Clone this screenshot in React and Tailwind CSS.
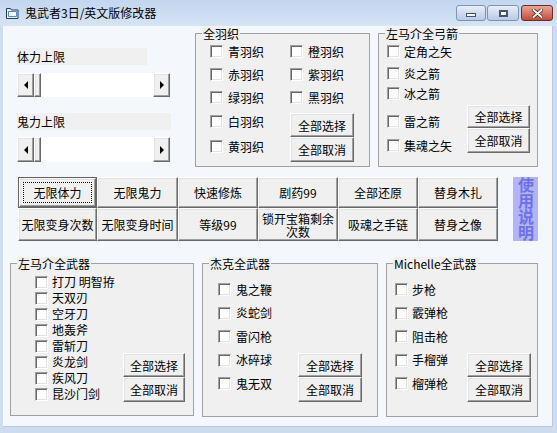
const font = "font-['Noto_Sans_CJK_SC','Noto_Sans',sans-serif]";

const btn3d =
  "bg-[#f0f0f0] border border-t-white border-l-white border-r-[#696969] border-b-[#696969] shadow-[inset_-1px_-1px_#a0a0a0,inset_1px_1px_#e3e3e3]";

function Button({ children, className = "" }) {
  return (
    <div className={`${btn3d} flex items-center justify-center text-[12px] leading-[13px] text-black text-center ${className}`}>
      {children}
    </div>
  );
}

function Check({ label, gap = "ml-[5px]", className = "" }) {
  return (
    <div className={`flex items-center h-[13px] ${className}`}>
      <span className="w-[13px] h-[13px] shrink-0 bg-white border border-t-[#a0a0a0] border-l-[#a0a0a0] border-r-white border-b-white shadow-[inset_1px_1px_#696969,inset_-1px_-1px_#e3e3e3]" />
      <span className={`${gap} text-[12px] leading-none whitespace-nowrap`}>{label}</span>
    </div>
  );
}

function Group({ title, className = "", children }) {
  return (
    <div className={`relative border border-[#a0a0a0] bg-[#f0f0f0] ${className}`}>
      <span className="absolute left-[6px] -top-[7px] px-[1px] bg-[#f0f0f0] text-[12px] leading-[13px] whitespace-nowrap">
        {title}
      </span>
      {children}
    </div>
  );
}

function Arrow({ dir }) {
  return (
    <div className={`${btn3d} w-[17px] h-full flex items-center justify-center`}>
      {dir === "left" ? (
        <span className="w-0 h-0 border-y-[4px] border-y-transparent border-r-[4px] border-r-black" />
      ) : (
        <span className="w-0 h-0 border-y-[4px] border-y-transparent border-l-[4px] border-l-black" />
      )}
    </div>
  );
}

function Scroll({ className = "" }) {
  return (
    <div className={`flex w-[153px] h-[24px] bg-white ${className}`}>
      <Arrow dir="left" />
      <div className={`${btn3d} w-[7px] h-full`} />
      <div className="flex-1" />
      <Arrow dir="right" />
    </div>
  );
}

function ButtonPair({ w = "w-[64px]", h1 = "h-[24px]", h2 = "h-[25px]" }) {
  return (
    <>
      <Button className={`${w} ${h1}`}>全部选择</Button>
      <Button className={`${w} ${h2}`}>全部取消</Button>
    </>
  );
}

const cheats = [
  "无限体力", "无限鬼力", "快速修炼", "剧药99", "全部还原", "替身木扎",
  "无限变身次数", "无限变身时间", "等级99", "锁开宝箱剩余次数", "吸魂之手链", "替身之像",
];

export default function App() {
  return (
    <div className={`${font} w-[557px] h-[433px] bg-[#cddcef] flex flex-col text-black overflow-hidden`}>
      {/* title bar */}
      <div className="h-[26px] flex bg-gradient-to-b from-[#c2d6ef] to-[#d6e4f4]">
        <div className="flex items-center flex-1">
          <svg className="ml-[6px]" width="13" height="12" viewBox="0 0 13 12">
            <path d="M0.5 1.5h4l1 1.5h6.5v8.5h-11.5z" fill="#e8f0f8" stroke="#2b3a55" />
            <path d="M2.5 4.5h8v5h-8z" fill="#fff" stroke="#4a8fc7" />
          </svg>
          <span className="ml-[6px] text-[12px] leading-none">鬼武者3日/英文版修改器</span>
        </div>
        <div className="flex items-start pt-[5px] pr-[4px]">
          <div className="w-[30px] h-[16px] rounded-[3px] border border-[#7b93b4] bg-gradient-to-b from-[#e7eef8] to-[#b9cbe4] flex items-center justify-center">
            <span className="w-[10px] h-[4px] mt-[4px] bg-white border border-[#46566e]" />
          </div>
          <div className="ml-[1px] w-[32px] h-[16px] rounded-[3px] border border-[#7b93b4] bg-gradient-to-b from-[#e7eef8] to-[#b9cbe4] flex items-center justify-center">
            <span className="w-[9px] h-[7px] border-2 border-[#46566e] bg-white" />
          </div>
          <div className="ml-[2px] w-[32px] h-[16px] rounded-[3px] border border-[#6d2b24] bg-gradient-to-b from-[#e8a596] to-[#c44a38] flex items-center justify-center">
            <svg width="11" height="9" viewBox="0 0 11 9">
              <path d="M1.5 1l8 7M9.5 1l-8 7" stroke="#4a1a14" strokeWidth="3.4" strokeLinecap="round" />
              <path d="M1.5 1l8 7M9.5 1l-8 7" stroke="#fff" strokeWidth="2" strokeLinecap="round" />
            </svg>
          </div>
        </div>
      </div>

      {/* client area */}
      <div className="ml-[3px] w-[550px] h-[401px] bg-[#f4f7fc] border-b border-r border-[#b7cae3] flex flex-col">
        {/* top section */}
        <div className="h-[151px] flex items-start">
          <div className="w-[192px] pl-[14px] pt-[22px] flex flex-col">
            <div className="w-[130px] h-[17px] bg-[#f0f0f0] flex items-center text-[12px] leading-none">体力上限</div>
            <Scroll className="mt-[8px]" />
            <div className="mt-[16px] w-[154px] h-[17px] bg-[#f0f0f0] flex items-center text-[12px] leading-none">鬼力上限</div>
            <Scroll className="mt-[7px] h-[25px]" />
          </div>

          <Group title="全羽织" className="mt-[7px] w-[175px] h-[134px]">
            <div className="flex pl-[14px]">
              <div className="w-[80px] flex flex-col pt-[11px]">
                <Check label="青羽织" />
                <Check label="赤羽织" className="mt-[10px]" />
                <Check label="绿羽织" className="mt-[10px]" />
                <Check label="白羽织" className="mt-[11px]" />
                <Check label="黄羽织" className="mt-[12px]" />
              </div>
              <div className="flex flex-col pt-[11px]">
                <Check label="橙羽织" />
                <Check label="紫羽织" className="mt-[10px]" />
                <Check label="黑羽织" className="mt-[10px]" />
                <div className="mt-[9px] flex flex-col">
                  <ButtonPair />
                </div>
              </div>
            </div>
          </Group>

          <Group title="左马介全弓箭" className="ml-[8px] mt-[7px] w-[160px] h-[134px]">
            <div className="flex pl-[8px]">
              <div className="w-[80px] flex flex-col pt-[11px]">
                <Check label="定角之矢" gap="ml-[4px]" />
                <Check label="炎之箭" gap="ml-[4px]" className="mt-[9px]" />
                <Check label="冰之箭" gap="ml-[4px]" className="mt-[7px]" />
                <Check label="雷之箭" gap="ml-[4px]" className="mt-[15px]" />
                <Check label="集魂之矢" gap="ml-[4px]" className="mt-[11px]" />
              </div>
              <div className="flex flex-col pt-[71px]">
                <ButtonPair w="w-[63px]" h1="h-[23px]" h2="h-[25px]" />
              </div>
            </div>
          </Group>
        </div>

        {/* cheat buttons */}
        <div className="flex items-start ml-[15px]">
          <div className="grid grid-cols-[79px_81px_80px_80px_80px_80px] grid-rows-[31px_33px]">
            {cheats.map((c, i) =>
              i === 0 ? (
                <div key={c} className="border border-[#646464]">
                  <div className={`${btn3d} w-full h-full p-[3px]`}>
                    <div className="w-full h-full border border-dotted border-black flex items-center justify-center text-[12px] leading-none">
                      {c}
                    </div>
                  </div>
                </div>
              ) : (
                <Button key={c} className="px-0">{c}</Button>
              )
            )}
          </div>
          <div className="ml-[15px] w-[25px] h-[64px] bg-[#b3b3fa] flex justify-center">
            <span className="[writing-mode:vertical-rl] text-[#6e6ef5] font-bold text-[16px] leading-[25px]">
              使用说明
            </span>
          </div>
        </div>

        {/* bottom groups */}
        <div className="mt-[22px] pl-[7px] flex items-start gap-[8px]">
          <Group title="左马介全武器" className="w-[184px] h-[153px]">
            <div className="flex pl-[24px]">
              <div className="w-[88px] flex flex-col pt-[10px]">
                {["打刀 明智拵", "天双刃", "空牙刀", "地轰斧", "雷斩刀", "炎龙剑", "疾风刀", "昆沙门剑"].map((t) => (
                  <div key={t} className="h-[16px] flex items-center">
                    <Check label={t} gap="ml-[4px]" />
                  </div>
                ))}
              </div>
              <div className="flex flex-col pt-[89px]">
                <ButtonPair w="w-[62px]" />
              </div>
            </div>
          </Group>

          <Group title="杰克全武器" className="w-[176px] h-[154px]">
            <div className="flex pl-[15px]">
              <div className="w-[80px] flex flex-col pt-[14px]">
                {["鬼之鞭", "炎蛇剑", "雷闪枪", "冰碎球", "鬼无双"].map((t) => (
                  <div key={t} className="h-[23.5px] flex items-center">
                    <Check label={t} />
                  </div>
                ))}
              </div>
              <div className="flex flex-col pt-[89px]">
                <ButtonPair />
              </div>
            </div>
          </Group>

          <Group title="Michelle全武器" className="w-[152px] h-[154px]">
            <div className="flex pl-[8px]">
              <div className="w-[72px] flex flex-col pt-[14px]">
                {["步枪", "霰弹枪", "阻击枪", "手榴弹", "榴弹枪"].map((t) => (
                  <div key={t} className="h-[23.5px] flex items-center">
                    <Check label={t} gap="ml-[4px]" />
                  </div>
                ))}
              </div>
              <div className="flex flex-col pt-[89px]">
                <ButtonPair />
              </div>
            </div>
          </Group>
        </div>
      </div>
    </div>
  );
}
